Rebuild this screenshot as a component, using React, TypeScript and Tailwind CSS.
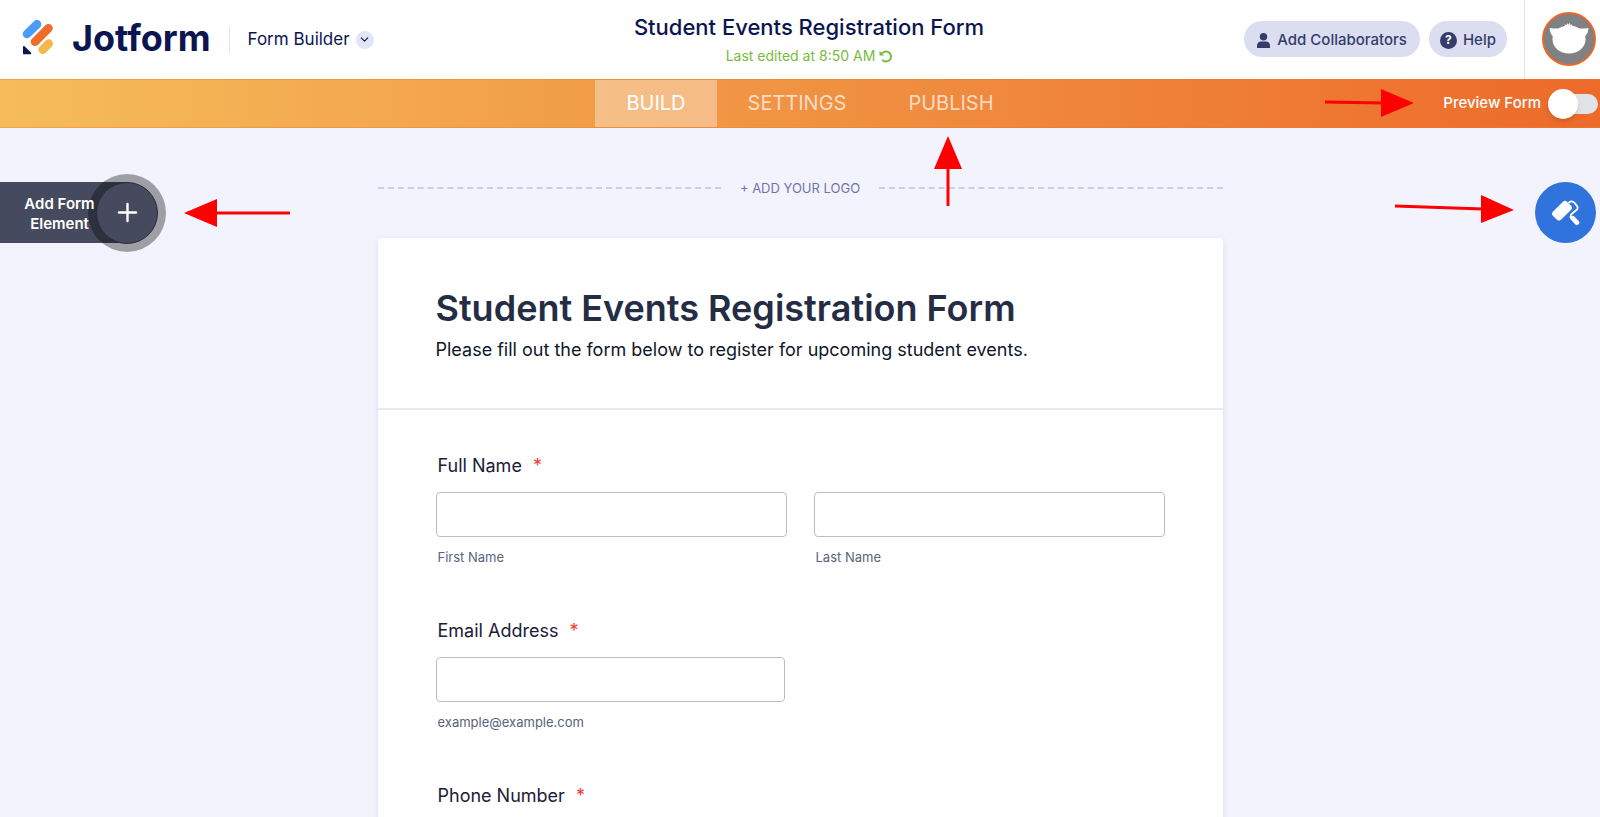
import React, { useState } from 'react';
import { ChevronDown, Plus } from 'lucide-react';

const TABS = ['BUILD', 'SETTINGS', 'PUBLISH'];

const JotformMark = () => (
  <svg width="32" height="35" viewBox="0 0 32 35" strokeLinecap="round" strokeWidth="8.600">
    <path d="M5 14 15 4.300" stroke="#4a9cfa" />
    <path d="M13 21.700 26.500 8.200" stroke="#ee6c2c" />
    <path d="M20.700 29.700 26.700 23.500" stroke="#f5b84c" />
    <path d="M1 27.200c0-1.200 1-1.600 1.800-.8l6 6c.9.9.4 1.800-.8 1.800H2c-.6 0-1-.4-1-1z" fill="#0a1551" />
  </svg>
);

const Avatar = () => (
  <svg width="54" height="54" viewBox="0 0 54 54">
    <circle cx="27" cy="27" r="26" fill="#808184" stroke="#ee6723" strokeWidth="2" />
    <g fill="#fff">
      <ellipse cx="27" cy="27.500" rx="16.500" ry="14" />
      <path d="M7.700 16c4 .8 8.500.6 13 .2L11.500 29c-.8-1.500-.6-3-.4-4.500C9 22.500 7.500 19.500 7.700 16z" />
      <path d="M46.300 16c-4 .8-8.500.6-13 .2L42.500 29c.8-1.500.6-3 .4-4.500 2.100-2 3.600-5 3.400-8.500z" />
      <path d="m23 14.500-.3-2.300 1.800 1 .8-2 1.300 1.500 1.300-1.900.4 2.200 1.900-.6-.3 2.100z" />
    </g>
  </svg>
);

const PaintRoller = () => (
  <svg width="28" height="26" viewBox="0 0 28 26" fill="none" stroke="#fff" strokeLinecap="round">
    <rect x="0" y="5" width="20" height="11.500" rx="3.200" transform="rotate(-45 10 10.750)" fill="#fff" stroke="none" />
    <path d="M17 2.500c2-1.500 4-1.200 5.200.2l2.600 3c1.200 1.500 1.100 3.200-.3 4.300l-4.700 3.700c-1 .8-1.300 1.800-1.300 3.500" strokeWidth="1.800" />
    <path d="m20.700 18.200 4.200 4.400" strokeWidth="4.800" />
  </svg>
);

interface ArrowProps {
  className: string;
  width: number;
  height: number;
  line: string;
  head: string;
}

const Arrow: React.FC<ArrowProps> = ({ className, width, height, line, head }) => (
  <svg className={`absolute z-20 pointer-events-none ${className}`} width={width} height={height}>
    <path d={line} stroke="#f00" strokeWidth="3" />
    <path d={head} fill="#f00" />
  </svg>
);

interface FieldProps {
  id: string;
  hint?: string;
  type?: string;
  label?: string;
}

const Field: React.FC<FieldProps> = ({ id, hint, type = 'text', label }) => (
  <div className="flex flex-col">
    <input
      id={id}
      type={type}
      aria-label={label}
      className="h-[45px] w-full rounded border border-[#b8bdc9] bg-white px-3 text-base outline-none focus:border-blue-500"
    />
    {hint && <label htmlFor={id} className="mt-3 pl-0.5 text-[13px] leading-4 text-[#57647e]">{hint}</label>}
  </div>
);

const Question = ({ title, children }: { title: string; children: React.ReactNode }) => (
  <fieldset className="mb-[54px]">
    <legend className="mb-3.5 pl-0.5 text-lg leading-6 text-[#1a2036]">
      {title} <span className="ml-1.5 text-[#f23a3c]">*</span>
    </legend>
    {children}
  </fieldset>
);

export default function App() {
  const [activeTab, setActiveTab] = useState('BUILD');
  const [preview, setPreview] = useState(false);

  return (
    <div className="relative flex h-screen flex-col overflow-hidden bg-[#f3f3fe] font-['Inter','Liberation_Sans',sans-serif] text-[#0a1551]">
      {/* Top bar */}
      <header className="grid h-[79px] shrink-0 grid-cols-[1fr_auto_1fr] bg-white pl-[22px] pr-1">
        <div className="flex items-center pb-1">
          <a href="#" className="flex items-center gap-[18px]">
            <JotformMark />
            <span className="text-4xl font-bold leading-9">Jotform</span>
          </a>
          <div className="ml-[18px] mt-1 h-6 w-px bg-[#e3e5f5]" />
          <button className="ml-[18px] flex items-center gap-1.5 pt-1 text-[17px]">
            Form Builder
            <span className="flex size-[18px] items-center justify-center rounded-full bg-[#e3e5f5]">
              <ChevronDown size={13} />
            </span>
          </button>
        </div>

        <div className="flex flex-col items-center pt-[11px]">
          <h1 className="text-[22px] font-medium leading-8">Student Events Registration Form</h1>
          <p className="flex items-center gap-1 text-sm leading-[26px] text-[#78bb43]">
            Last edited at 8:50 AM
            <svg width="13" height="13" viewBox="0 0 13 13" fill="none" stroke="currentColor" strokeWidth="2">
              <path d="M2.500 3.700C4 2 5.500 1.500 7 1.500a5 5 0 0 1 0 10c-1.500 0-2.700-.5-3.700-1.500" />
              <path d="M.5.800v4.700h4.700z" fill="currentColor" stroke="none" />
            </svg>
          </p>
        </div>

        <div className="flex items-center justify-end">
          <button className="mb-px flex h-9 items-center gap-[7px] rounded-full bg-[#dadef0] px-[13px] pt-0.5 text-[15px] font-medium text-[#343c6a]">
            <svg width="13" height="15" viewBox="0 0 13 15" fill="currentColor">
              <circle cx="6.500" cy="3.700" r="3.700" />
              <path d="M0 15v-2.500C0 10 2 8.500 4 8.500h5c2 0 4 1.500 4 4V15z" />
            </svg>
            Add Collaborators
          </button>
          <button className="mb-px ml-[9px] flex h-9 items-center gap-1.5 rounded-full bg-[#dadef0] px-[11px] pt-0.5 text-[15px] font-medium text-[#343c6a]">
            <span className="flex size-[17px] items-center justify-center rounded-full bg-[#343c6a] text-xs font-bold text-white">?</span>
            Help
          </button>
          <div className="ml-[17px] flex h-full items-center border-l border-[#e3e3e8] pb-0.5 pl-[17px]">
            <button aria-label="Account">
              <Avatar />
            </button>
          </div>
        </div>
      </header>

      {/* Tabs */}
      <nav className="grid h-[49px] shrink-0 grid-cols-[1fr_auto_1fr] border-y border-[#ee7d1c]/40 bg-linear-to-r from-[#f5bc5b] via-[#f09242] to-[#ed6a2a] bg-origin-border pl-[22px] pr-0.5">
        <div />
        <div className="flex">
          {TABS.map(tab => (
            <button
              key={tab}
              onClick={() => setActiveTab(tab)}
              className={`px-[31px] pb-0.5 text-xl ${activeTab === tab ? 'bg-white/35 text-white' : 'text-white/70'}`}
            >
              {tab}
            </button>
          ))}
        </div>
        <label className="flex items-center justify-end gap-[7px] text-[15px] font-medium text-white">
          Preview Form
          <span className="relative flex h-[30px] w-[50px] items-center">
            <input
              type="checkbox"
              role="switch"
              checked={preview}
              onChange={e => setPreview(e.target.checked)}
              className="ml-auto h-5 w-9 appearance-none rounded-full bg-[#e2e3e9] checked:bg-lime-500"
            />
            <span className={`pointer-events-none absolute top-0 size-[30px] rounded-full bg-white shadow-md ${preview ? 'right-0' : 'left-0'}`} />
          </span>
        </label>
      </nav>

      {/* Canvas */}
      <main className="relative flex-1 px-6">
        <button className="absolute left-0 top-[54px] flex h-[61px] w-[127px] items-center bg-[#454a5e] text-[15px] font-semibold leading-5 text-white">
          <span className="absolute -right-[39px] size-[78px] rounded-full bg-black/35" />
          <span className="absolute -right-[31px] flex size-[62px] items-center justify-center rounded-full border border-[#272b3b] bg-[#454a5e]">
            <Plus size={29} strokeWidth={2} />
          </span>
          <span className="relative ml-[22px] w-[75px] pt-0.5 text-center">Add Form Element</span>
        </button>

        <button
          aria-label="Form Designer"
          className="absolute right-1 top-[54px] flex size-[61px] items-center justify-center rounded-full bg-[#3173dc]"
        >
          <PaintRoller />
        </button>

        <div className="mx-auto max-w-[845px]">
          <button className="flex h-[110px] w-full items-center gap-[19px] pt-2.5 text-[13px] text-[#6f76a7]">
            <span className="flex-1 border-t-2 border-dashed border-[#c8ceed]" />
            <span className="pt-0.5">+ ADD YOUR LOGO</span>
            <span className="flex-1 border-t-2 border-dashed border-[#c8ceed]" />
          </button>

          <form className="rounded bg-white shadow-[0_2px_6px_rgba(84,95,180,0.16)]">
            <div className="border-b-2 border-[#e9e9f2] px-[58px] pb-[46px] pt-[46px]">
              <h2 className="text-4xl font-semibold leading-[48px] text-[#252d44]">Student Events Registration Form</h2>
              <p className="mt-1.5 text-lg leading-6 text-[#0f1629]">
                Please fill out the form below to register for upcoming student events.
              </p>
            </div>

            <div className="px-[58px] pt-11">
              <Question title="Full Name">
                <div className="grid grid-cols-2 gap-[27px]">
                  <Field id="first-name" hint="First Name" />
                  <Field id="last-name" hint="Last Name" />
                </div>
              </Question>
              <Question title="Email Address">
                <div className="max-w-[349px]">
                  <Field id="email" type="email" hint="example@example.com" />
                </div>
              </Question>
              <Question title="Phone Number">
                <div className="max-w-[349px]">
                  <Field id="phone" type="tel" label="Phone Number" />
                </div>
              </Question>
            </div>
          </form>
        </div>
      </main>

      {/* Callout arrows */}
      <Arrow className="right-[186px] top-[89px]" width={89} height={28} line="M0 13 58 14" head="M56 0v28l33-14z" />
      <Arrow className="left-[calc(50%+134px)] top-[136px]" width={28} height={70} line="M14 70V30" head="M0 33h28L14 0z" />
      <Arrow className="left-[184px] top-[199px]" width={106} height={28} line="M106 14H30" head="M33 0v28L0 14z" />
      <Arrow className="right-[86px] top-[195px]" width={119} height={28} line="M0 11 88 14" head="M86 0v28l33-13z" />
    </div>
  );
}
